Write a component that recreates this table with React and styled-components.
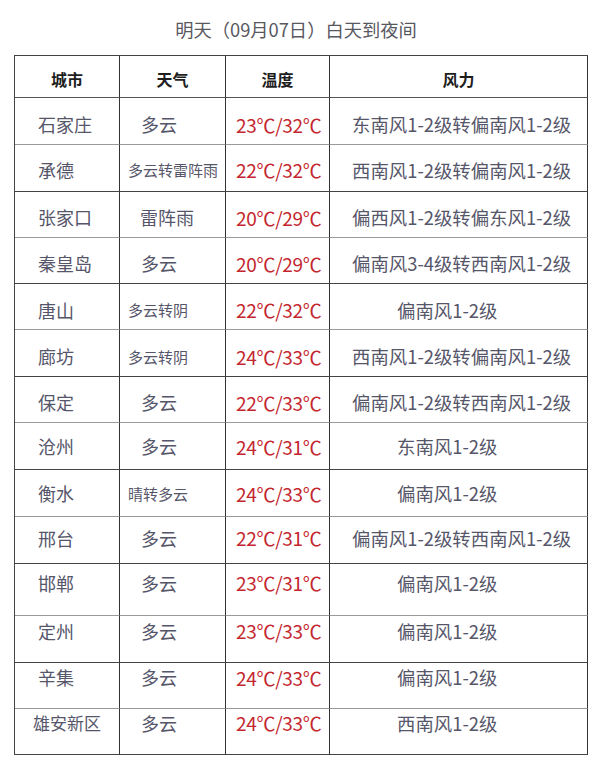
import React from "react";
import styled, { createGlobalStyle } from "styled-components";

const Global = createGlobalStyle`
  html, body { margin: 0; padding: 0; background: #fff; }
  body { font-family: "Noto Sans CJK SC", "Noto Sans", sans-serif; }
`;

const Page = styled.div`
  width: 600px;
  height: 775px;
  background: #fff;
  display: flex;
  flex-direction: column;
  align-items: flex-start;
`;

const Title = styled.h1`
  margin: 0;
  width: 592px;
  height: 55px;
  padding-top: 20px;
  box-sizing: border-box;
  text-align: center;
  font-size: 18.3px;
  font-weight: 400;
  line-height: 18px;
  color: #58585f;
`;

const Table = styled.div`
  margin-left: 14px;
  display: grid;
  grid-template-columns: 105px 106px 104px 258px;
  border-top: 1px solid #444;
  border-left: 1px solid #444;
`;

const HeadCell = styled.div`
  height: 42px;
  box-sizing: border-box;
  border-right: 1px solid #333;
  border-bottom: 1px solid #555;
  display: flex;
  align-items: center;
  justify-content: center;
  padding-top: 5px;
  font-size: 16px;
  font-weight: 700;
  color: #1e1e1e;
`;

const Cell = styled.div`
  height: ${(p) => p.$h}px;
  box-sizing: border-box;
  border-right: 1px solid #333;
  border-bottom: 1px solid ${(p) => (p.$light ? "#9a9a9a" : "#444")};
  display: flex;
  align-items: center;
  padding-left: ${(p) => p.$indent}px;
  padding-top: ${(p) => Math.max(0, p.$shift * 2)}px;
  padding-bottom: ${(p) => Math.max(0, -p.$shift * 2)}px;
  font-size: ${(p) => p.$size}px;
  color: ${(p) => (p.$red ? "#c3262e" : "#56566a")};
  white-space: nowrap;
  letter-spacing: ${(p) => (p.$red ? "-0.3px" : "0")};
`;

const rows = [
  ["石家庄", "多云", "23℃/32℃", "东南风1-2级转偏南风1-2级", 47, 3],
  ["承德", "多云转雷阵雨", "22℃/32℃", "西南风1-2级转偏南风1-2级", 46.7, 2],
  ["张家口", "雷阵雨", "20℃/29℃", "偏西风1-2级转偏东风1-2级", 46, 3],
  ["秦皇岛", "多云", "20℃/29℃", "偏南风3-4级转西南风1-2级", 46.6, 3],
  ["唐山", "多云转阴", "22℃/32℃", "偏南风1-2级", 46, 3],
  ["廊坊", "多云转阴", "24℃/33℃", "西南风1-2级转偏南风1-2级", 46.7, 3],
  ["保定", "多云", "22℃/33℃", "偏南风1-2级转西南风1-2级", 46.5, 2.5],
  ["沧州", "多云", "24℃/31℃", "东南风1-2级", 46.8, 0],
  ["衡水", "晴转多云", "24℃/33℃", "偏南风1-2级", 46.7, 0],
  ["邢台", "多云", "22℃/31℃", "偏南风1-2级转西南风1-2级", 46.7, -2],
  ["邯郸", "多云", "23℃/31℃", "偏南风1-2级", 52.3, -6.5],
  ["定州", "多云", "23℃/33℃", "偏南风1-2级", 46.7, -8],
  ["辛集", "多云", "24℃/33℃", "偏南风1-2级", 46.6, -8],
  ["雄安新区", "多云", "24℃/33℃", "西南风1-2级", 45.7, -9],
];

export default function App() {
  return (
    <Page>
      <Global />
      <Title>明天（09月07日）白天到夜间</Title>
      <Table>
        <HeadCell>城市</HeadCell>
        <HeadCell>天气</HeadCell>
        <HeadCell>温度</HeadCell>
        <HeadCell>风力</HeadCell>
        {rows.map(([city, weather, temp, wind, h, shift], i) => {
          const light = i % 2 === 0;
          const longWeather = weather.length > 3;
          const longWind = wind.length > 8;
          const longCity = city.length > 3;
          return (
            <React.Fragment key={city}>
              <Cell $h={h} $shift={shift} $light={light} $indent={longCity ? 18 : 23} $size={longCity ? 17 : 18}>
                {city}
              </Cell>
              <Cell $h={h} $shift={shift} $light={light} $indent={longWeather ? 8 : weather.length === 3 ? 20 : 21} $size={longWeather ? 15 : 18}>
                {weather}
              </Cell>
              <Cell $h={h} $shift={shift} $light={light} $indent={10} $size={19} $red>
                {temp}
              </Cell>
              <Cell $h={h} $shift={shift} $light={light} $indent={longWind ? 22 : 67} $size={18.4}>
                {wind}
              </Cell>
            </React.Fragment>
          );
        })}
      </Table>
    </Page>
  );
}
